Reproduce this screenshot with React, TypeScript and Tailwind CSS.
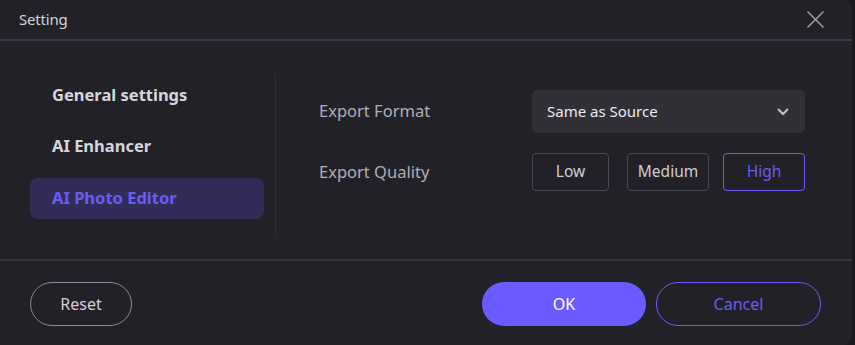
import React from "react";

export default function App() {
  const font = { fontFamily: '"Noto Sans", "Open Sans", sans-serif' };
  return (
    <div className="w-[855px] h-[345px] bg-[#1a191f]" style={font}>
      <div className="w-[852px] h-[345px] bg-[#222128] rounded-r-[8px] flex flex-col">
        {/* header */}
        <div className="h-[39px] flex items-center justify-between pl-[19px] pr-[27px]">
          <span className="text-[15px] text-[#d4d3da] leading-none tracking-[-0.2px]">Setting</span>
          <svg width="19" height="19" viewBox="0 0 19 19" className="text-[#a9a8b0]">
            <path d="M1.5 1.5 L17.5 17.5 M17.5 1.5 L1.5 17.5" stroke="currentColor" strokeWidth="1.3" fill="none" />
          </svg>
        </div>
        <div className="h-[2px] bg-[#3c3a48]" />
        {/* body */}
        <div className="h-[218px] flex">
          <div className="w-[275px] pl-[30px] pr-[11px] pt-[34px] flex flex-col">
            <div className="h-[41px] flex items-center pl-[22px] text-[16.5px] font-bold text-[#d6d5dc] mb-[10px]">General settings</div>
            <div className="h-[41px] flex items-center pl-[22px] text-[16.5px] font-bold text-[#d6d5dc] mb-[11px]">AI Enhancer</div>
            <div className="h-[41px] flex items-center pl-[22px] text-[16.5px] font-bold text-[#6b5cf6] bg-[#322c58] rounded-[8px]">AI Photo Editor</div>
          </div>
          <div className="w-[1px] bg-[#2f2e37] mt-[32px] h-[165px]" />
          <div className="flex-1 pl-[43px] pt-[49px] pr-[47px] flex flex-col">
            <div className="flex items-center h-[43px] mb-[20px]">
              <span className="w-[213px] text-[16.5px] text-[#b0afb7]">Export Format</span>
              <div className="flex-1 h-[43px] bg-[#313037] rounded-[5px] flex items-center justify-between pl-[15px] pr-[15px]">
                <span className="text-[15px] text-[#ecebf0]">Same as Source</span>
                <svg width="14" height="9" viewBox="0 0 14 9">
                  <path d="M2 2 L7 7 L12 2" stroke="#c4c3ca" strokeWidth="2" fill="none" />
                </svg>
              </div>
            </div>
            <div className="flex items-center h-[38px]">
              <span className="w-[213px] text-[16.5px] text-[#b0afb7]">Export Quality</span>
              <div className="flex gap-[18px]">
                <div className="w-[77px] h-[38px] border border-[#4a4854] rounded-[4px] flex items-center justify-center text-[15.5px] text-[#d0cfd6]">Low</div>
                <div className="w-[82px] h-[38px] border border-[#4a4854] rounded-[4px] flex items-center justify-center text-[15.5px] text-[#d0cfd6] -mr-[4px]">Medium</div>
                <div className="w-[82px] h-[38px] border border-[#6b5cf6] rounded-[4px] flex items-center justify-center text-[15.5px] text-[#6b5cf6]">High</div>
              </div>
            </div>
          </div>
        </div>
        <div className="h-[2px] bg-[#35343c]" />
        {/* footer */}
        <div className="flex-1 flex items-start pt-[21px] pl-[30px] pr-[31px]">
          <div className="w-[102px] h-[44px] rounded-full border-[1.5px] border-[#8d8b95] flex items-center justify-center text-[16px] text-[#d0cfd6]">Reset</div>
          <div className="flex-1" />
          <div className="w-[164px] h-[44px] rounded-full bg-[#6b5aff] flex items-center justify-center text-[16px] text-white">OK</div>
          <div className="w-[165px] h-[44px] ml-[10px] rounded-full border-[1.5px] border-[#6b5cf6] flex items-center justify-center text-[16px] text-[#6b5cf6]">Cancel</div>
        </div>
      </div>
    </div>
  );
}
